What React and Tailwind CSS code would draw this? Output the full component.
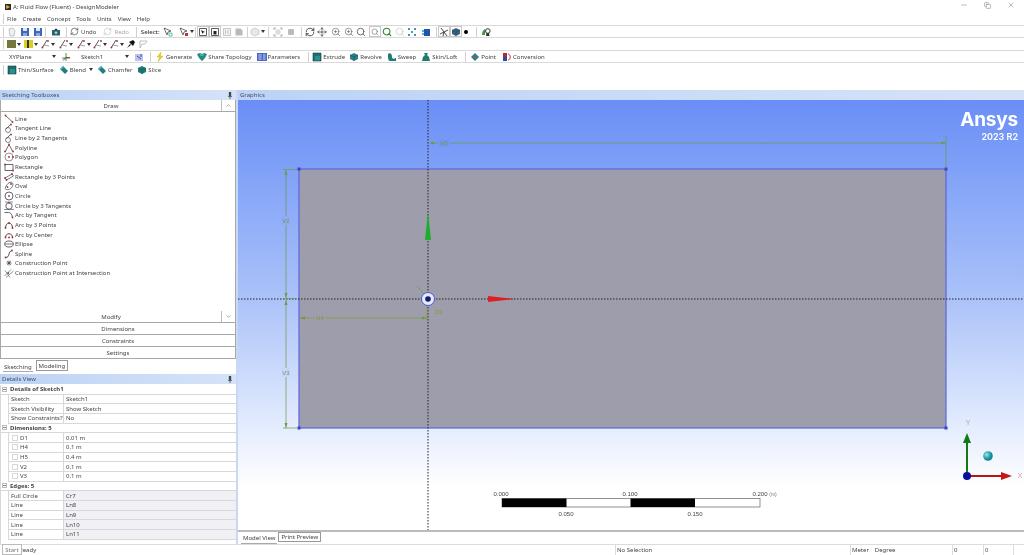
import React from "react";
import { RefreshCw, Move, ZoomIn, Search, Minus, X, Copy, ChevronUp, ChevronDown } from "lucide-react";

const V = ({ children, className = "" }) => (
  <svg viewBox="0 0 10 10" className={"block w-[10px] h-[10px] shrink-0 " + className}>{children}</svg>
);
const Dot = ({ x, y }) => <circle cx={x} cy={y} r="0.9" fill="#a83232" />;
const L = ({ d, c = "#444", w = 0.8 }) => <path d={d} fill="none" stroke={c} strokeWidth={w} />;
const Caret = () => <svg viewBox="0 0 4 3" className="block w-[4px] h-[3px] shrink-0"><path d="M0 0h4L2 3z" fill="#333" /></svg>;
const Sep = ({ className = "" }) => <div className={"w-px h-[10px] bg-[#d0d0d0] shrink-0 " + className} />;
const Cell = ({ children, boxed }) => (
  <div className={"w-[12px] h-[11px] flex items-center justify-center shrink-0 " + (boxed ? "border border-[#c8c8c8]" : "")}>{children}</div>
);
const Narrow = ({ children }) => <div className="w-[10px] h-[11px] flex items-center justify-center shrink-0">{children}</div>;
const T = ({ children, className = "" }) => <span className={"whitespace-nowrap leading-none " + className}>{children}</span>;

const Floppy = () => (
  <V><path d="M1 1h8v8H1z" fill="#3f66b8" /><path d="M3 1h4v3H3z" fill="#dfe8f6" /><path d="M3 6h4v3H3z" fill="#8fa7d8" /></V>
);
const Cube = ({ c = "#1f7a78" }) => (
  <V><path d="M5 1l4 2v4L5 9 1 7V3z" fill={c} /><path d="M1 3l4 2 4-2M5 5v4" stroke="#0f4a4a" strokeWidth="0.5" fill="none" /></V>
);
const SquareTeal = () => (
  <V><path d="M1 1h8v8H1z" fill="#1d6e70" /><path d="M3 4h5v5H3z" fill="#2b8f8d" /><path d="M1 1h8v8H1z" fill="none" stroke="#0d4244" strokeWidth="0.6" /></V>
);
const Tag = () => (
  <V><path d="M1 4l3-3 5 5-3 3z" fill="#1f7f85" /><path d="M1 4l3-3 1 1-3 3z" fill="#66b5b8" /></V>
);
const SketchTool = ({ n }) => (
  <V><L d="M1 9L6 1" w="0.9" /><L d="M3 6l5 1" c="#777" w="0.7" /><Dot x="1.5" y="8.5" /><Dot x={n} y="2" /></V>
);

const Row1 = () => (
  <div className="flex items-center h-[13px] border-y border-[#d9d9d9] pl-[3px] text-[#444] shrink-0">
    <Sep className="mr-[2px]" />
    <Cell><V><path d="M2 2l4-1 2 3-1 5H3z" fill="#eef1f5" stroke="#9aa3ad" strokeWidth="0.6" /></V></Cell>
    <div className="ml-px" /><Cell><Floppy /></Cell>
    <div className="ml-px" /><Cell><Floppy /></Cell>
    <Sep className="ml-[1px] mr-[4px]" />
    <Cell><V><path d="M1 3h8v5.5H1z" fill="#28666e" /><circle cx="5" cy="5.7" r="1.8" fill="#bcd" stroke="#123" strokeWidth="0.5" /><path d="M3.5 3l.7-1.2h1.6L6.5 3z" fill="#333" /></V></Cell>
    <Sep className="ml-[4px] mr-[3px]" />
    <div className="flex items-center gap-px">
      <RefreshCw size={9} strokeWidth={1.6} color="#333" className="shrink-0" />
      <T className="ml-[1px] text-[#444]">Undo</T>
    </div>
    <div className="flex items-center gap-px ml-[7px] text-[#aaa]">
      <RefreshCw size={9} strokeWidth={1.2} color="#aaa" className="shrink-0" />
      <T className="ml-[1px]">Redo</T>
    </div>
    <Sep className="ml-[7px] mr-[4px]" />
    <T className="text-[#333] font-medium">Select:</T>
    <div className="ml-[2px]" />
    <Cell><V><path d="M1 1l3 7 1-3 3-1z" fill="#fff" stroke="#333" strokeWidth="0.7" /><path d="M6 6h3v3H6z" fill="none" stroke="#2a8" strokeWidth="0.7" /></V></Cell>
    <div className="ml-[4px]" />
    <Cell><V><path d="M1 1l3 7 1-3 3-1z" fill="#fff" stroke="#333" strokeWidth="0.7" /><path d="M6 6h3v3H6z" fill="#c0343c" /></V></Cell>
    <Caret />
    <Sep className="ml-[1px] mr-[1px]" />
    <Cell boxed><V><path d="M1.5 1.5h7v7h-7z" fill="#fff" stroke="#333" strokeWidth="0.8" /><path d="M3 3l1.5 4 .8-1.6L7 5z" fill="#222" /></V></Cell>
    <Cell boxed><V><path d="M1.5 1.5h7v7h-7z" fill="#fff" stroke="#333" strokeWidth="0.8" /><path d="M3.5 4h3v3.5h-3z" fill="#222" /></V></Cell>
    <Cell><V><path d="M1.5 1.5h7v7h-7z" fill="#f2f2f2" stroke="#bbb" strokeWidth="0.8" /><path d="M3.5 3v4M6 3v4" stroke="#bbb" strokeWidth="0.8" /></V></Cell>
    <Cell><V><path d="M1.5 1.5h5l2 2v5h-7z" fill="#b9b9b9" /></V></Cell>
    <Sep className="ml-[2px] mr-[1px]" />
    <Cell><V><path d="M5 1l4 2v4L5 9 1 7V3z" fill="#e8e8e8" stroke="#bbb" strokeWidth="0.6" /></V></Cell>
    <Caret />
    <Sep className="ml-[3px] mr-[3px]" />
    <Cell><V><path d="M2.5 2.5h5v5h-5z" fill="#ddd" /><path d="M1 3V1h2M7 1h2v2M9 7v2H7M3 9H1V7" stroke="#999" strokeWidth="0.8" fill="none" /></V></Cell>
    <div className="ml-px" />
    <Cell><V><path d="M2.5 2.5h5v5h-5z" fill="#bbb" stroke="#aaa" strokeWidth="0.6" /></V></Cell>
    <Sep className="ml-[4px] mr-[1px]" />
    <div className="ml-[1px]" />
    <Cell><RefreshCw size={10} strokeWidth={2} color="#333" /></Cell>
    <Cell><Move size={10} strokeWidth={1.6} color="#333" /></Cell>
    <div className="ml-[2px]" />
    <Cell><ZoomIn size={10} strokeWidth={1.4} color="#555" /></Cell>
    <div className="ml-px" />
    <Cell><ZoomIn size={10} strokeWidth={1.4} color="#555" /></Cell>
    <Cell><Search size={10} strokeWidth={2} color="#555" /></Cell>
    <div className="ml-[2px]" />
    <Cell boxed><Search size={8} strokeWidth={1.6} color="#555" /></Cell>
    <Cell><Search size={10} strokeWidth={2.6} color="#2f8a2f" /></Cell>
    <div className="ml-px" />
    <Cell><Search size={10} strokeWidth={1.4} color="#bbb" /></Cell>
    <Cell><V><path d="M1 1h2v2H1zM7 1h2v2H7zM4 4h2v2H4zM1 7h2v2H1zM7 7h2v2H7z" fill="#4a98a8" /></V></Cell>
    <div className="ml-[2px]" />
    <Cell><V><path d="M3 2h6v7H3z" fill="#2454a8" /><path d="M1 3h2v2H1zM1 6h2v2H1z" fill="#55b6c8" /></V></Cell>
    <Sep className="ml-[4px] mr-px" />
    <Cell boxed><V><path d="M5 5L2 1M5 5l4-2M5 5l-1 4M5 5L1 7M5 5l3 4" stroke="#333" strokeWidth="0.9" /></V></Cell>
    <Cell boxed><Cube c="#3b5f80" /></Cell>
    <div className="w-[9px] flex justify-center"><div className="w-[4px] h-[4px] rounded-full bg-black" /></div>
    <Sep className="ml-[5px] mr-[3px]" />
    <Cell><V><path d="M1 8c0-3 1-5 3-6v6z" fill="#3a9a4a" /><circle cx="6.8" cy="4" r="2.3" fill="none" stroke="#333" strokeWidth="1" /><path d="M5.5 6l-.5 3h3.5l-.5-3" fill="#333" /></V></Cell>
  </div>
);

const Row2 = () => (
  <div className="flex items-center h-[12px] pl-[3px] shrink-0">
    <Sep className="mr-[1px]" />
    <Cell><div className="w-[9px] h-[8px] bg-[#75783c]" /></Cell>
    <Caret />
    <div className="ml-px" />
    <Cell><div className="w-[9px] h-[8px] bg-[#d8cf1e] border-x-[3px] border-[#d8cf1e] flex justify-center"><div className="w-[2px] h-full bg-[#333]" /></div></Cell>
    <Caret />
    <div className="ml-[3px]" /><Narrow><SketchTool n="7" /></Narrow><Caret />
    <div className="ml-[4px]" /><Narrow><SketchTool n="8" /></Narrow><Caret />
    <div className="ml-[4px]" /><Narrow><SketchTool n="7" /></Narrow><Caret />
    <div className="ml-[2px]" /><Narrow><SketchTool n="8" /></Narrow><Caret />
    <div className="ml-[3px]" /><Narrow><SketchTool n="7" /></Narrow><Caret />
    <div className="ml-[1px]" /><Cell><V><path d="M1 9l3-4 1 1zM3 3l4-2 2 2-2 4z" fill="#111" /></V></Cell>
    <Cell><V><path d="M2 2h7L7 5H4L2 9z" fill="none" stroke="#999" strokeWidth="0.6" /></V></Cell>
  </div>
);

const Tool = ({ icon, label, className = "" }) => (
  <div className={"flex items-center gap-[1px] shrink-0 " + className}>
    {icon}
    <T className="text-[#444]">{label}</T>
  </div>
);

const Row3 = () => (
  <div className="flex items-center h-[13px] border-y border-[#d9d9d9] shrink-0 pl-[9px]">
    <div className="w-[47px] flex items-center justify-between"><T className="text-[#444]">XYPlane</T><Caret /></div>
    <div className="w-[20px] flex justify-center"><V><path d="M5 1v8M1 6h8" stroke="#2c8a3a" strokeWidth="0.9" /><path d="M5 5.5h4" stroke="#c8202a" strokeWidth="0.9" /><path d="M5 5.5L2 8.5" stroke="#23338c" strokeWidth="0.9" /></V></div>
    <div className="w-[48px] ml-[5px] flex items-center justify-between"><T className="text-[#444]">Sketch1</T><Caret /></div>
    <div className="w-[20px] flex justify-center"><V><path d="M1 2h8v7H1z" fill="#b9c3ee" /><path d="M3 4l4 3M7 2v3" stroke="#4a37a8" strokeWidth="0.9" /></V></div>
    <Sep className="ml-[1px]" />
    <Tool className="ml-[4px]" label="Generate" icon={<V><path d="M6 0L2 5h2.5L3 10l5-6H5.5z" fill="#e8d11e" stroke="#b79f12" strokeWidth="0.3" /></V>} />
    <Tool className="ml-[5px]" label="Share Topology" icon={<V><path d="M0 2l3-1 2 1 2-1 3 1-2 4-3 3-3-3z" fill="#1f8a86" /><path d="M3 3h4" stroke="#d3e6e6" strokeWidth="0.6" /></V>} />
    <Tool className="ml-[5px]" label="Parameters" icon={<V><path d="M0 1h10v8H0z" fill="#4c6bc8" /><path d="M1.5 3h3M1.5 5h3M1.5 7h3M6 3h2.5M6 5h2.5M6 7h2.5" stroke="#e8eefc" strokeWidth="0.8" /></V>} />
    <Sep className="ml-[8px]" />
    <Tool className="ml-[3px]" label="Extrude" icon={<SquareTeal />} />
    <Tool className="ml-[4px]" label="Revolve" icon={<Cube c="#2d7f86" />} />
    <Tool className="ml-[5px]" label="Sweep" icon={<V><path d="M1 2c3-2 4 1 4 3s2 2 4 1v3H3C1 9 1 6 1 2z" fill="#1f7a78" /></V>} />
    <Tool className="ml-[5px]" label="Skin/Loft" icon={<V><path d="M3 1h4l-1 2 2 2 1 4H1l1-4 2-2z" fill="#1f7a70" /></V>} />
    <Sep className="ml-[8px]" />
    <Tool className="ml-[4px]" label="Point" icon={<V><path d="M5 1l4 4-4 4-4-4z" fill="#2d8088" /><circle cx="5" cy="5" r="1" fill="#c43" /></V>} />
    <Tool className="ml-[6px]" label="Conversion" icon={<V><path d="M1 1h4v4H1z" fill="#b0283a" /><path d="M1 5h4v4H1z" fill="#2d4aa0" /><path d="M6 2c3 0 3 6 0 6" fill="none" stroke="#b0283a" strokeWidth="0.9" /></V>} />
  </div>
);

const Row4 = () => (
  <div className="flex items-center h-[13px] pl-[3px] shrink-0">
    <Sep />
    <Tool className="ml-[3px]" label="Thin/Surface" icon={<SquareTeal />} />
    <Tool className="ml-[5px]" label="Blend" icon={<Tag />} />
    <div className="ml-[3px]"><Caret /></div>
    <Tool className="ml-[4px]" label="Chamfer" icon={<Tag />} />
    <Tool className="ml-[5px]" label="Slice" icon={<Cube />} />
  </div>
);

const Header = ({ title, pin }) => (
  <div className="h-[10px] bg-gradient-to-r from-[#bcd3f5] to-[#d5e3f8] flex items-center justify-between px-[2px] shrink-0">
    <T className="text-[#3f4f66]">{title}</T>
    {pin && <svg viewBox="0 0 5 9" className="block w-[4px] h-[7px] mr-[2px]"><path d="M1 0h3v5H1zM0 5h5v1H0zM2 6h1v3H2z" fill="#445" /></svg>}
  </div>
);

const tools = [
  ["Line", <V><L d="M1.5 1.5L8.5 8" /><Dot x="1.5" y="1.5" /><Dot x="8.5" y="8" /></V>],
  ["Tangent Line", <V><circle cx="4" cy="7" r="2.5" fill="none" stroke="#555" strokeWidth="0.7" /><L d="M2 6l5-5" /><Dot x="7" y="1.5" /></V>],
  ["Line by 2 Tangents", <V><circle cx="4" cy="7" r="2.5" fill="none" stroke="#555" strokeWidth="0.7" /><L d="M2 6l5-5" /><Dot x="7" y="1.5" /></V>],
  ["Polyline", <V><L d="M1 9L5 1.5 9 9" /><Dot x="1" y="8.5" /><Dot x="5" y="1.5" /><Dot x="9" y="8.5" /></V>],
  ["Polygon", <V><circle cx="5" cy="5" r="4" fill="none" stroke="#667" strokeWidth="0.7" /><Dot x="5" y="5" /><Dot x="9" y="5" /></V>],
  ["Rectangle", <V><path d="M1 2.5h8v6H1z" fill="none" stroke="#444" strokeWidth="0.8" /><Dot x="1" y="2.5" /><Dot x="9" y="8.5" /></V>],
  ["Rectangle by 3 Points", <V><path d="M1 6l7-4 1.5 2-7 4z" fill="none" stroke="#456" strokeWidth="0.8" /><Dot x="1" y="6" /><Dot x="8" y="2" /><Dot x="2.5" y="8" /></V>],
  ["Oval", <V><path d="M1.5 6.5C3 2 7 0 8.5 2s-1 6-4 6.5-3.5-.5-3-2z" fill="none" stroke="#456" strokeWidth="0.8" /><Dot x="3.5" y="6" /><Dot x="7" y="3" /></V>],
  ["Circle", <V><circle cx="5" cy="5" r="4" fill="none" stroke="#345" strokeWidth="0.8" /><Dot x="5" y="5" /></V>],
  ["Circle by 3 Tangents", <V><circle cx="5" cy="5" r="3.2" fill="none" stroke="#345" strokeWidth="0.8" /><L d="M0 8.5h10M1 1h8" w="0.6" /><Dot x="5" y="1.8" /></V>],
  ["Arc by Tangent", <V><L d="M0.5 2.5h4c2 0 3.5 1.5 4 5" /><Dot x="8.5" y="7.5" /></V>],
  ["Arc by 3 Points", <V><L d="M1.5 8C1.5 1.5 8.5 1.5 8.5 8" w="1" /><Dot x="1.5" y="8" /><Dot x="5" y="3" /><Dot x="8.5" y="8" /></V>],
  ["Arc by Center", <V><L d="M1.5 7.5C1.5 2.5 8.5 2.5 8.5 7.5" w="1" /><Dot x="1.5" y="7.5" /><Dot x="5" y="7.5" /><Dot x="8.5" y="7.5" /></V>],
  ["Ellipse", <V><ellipse cx="5" cy="5" rx="4.3" ry="3" fill="none" stroke="#345" strokeWidth="0.8" /><path d="M1 5h8" stroke="#a83232" strokeWidth="0.8" /></V>],
  ["Spline", <V><L d="M1.5 8.5C7 8 3 3 8 1.5" w="1" /><Dot x="1.5" y="8.5" /><Dot x="8" y="1.5" /></V>],
  ["Construction Point", <V><path d="M5 2.5v5M2.5 5h5M3.2 3.2l3.6 3.6M6.8 3.2L3.2 6.8" stroke="#445" strokeWidth="0.8" /></V>],
  ["Construction Point at Intersection", <V><L d="M0.5 8L7 1.5M2 9.5L9.5 3" c="#678" /><L d="M1 2.5l5 7" c="#678" /><Dot x="4.3" y="5" /></V>],
];

const Accordion = ({ label, arrow }) => (
  <div className="flex border-b border-[#a8a8a8] shrink-0 h-[12px]">
    <div className={"flex-1 flex items-center justify-center " + (arrow ? "border-r border-[#bdbdbd]" : "")}><T className="text-[#444]">{label}</T></div>
    {arrow}
  </div>
);

const Rw = ({ name, value, shade, box }) => (
  <div className="h-[9.67px] flex border-b border-[#d8d8d8] ml-[7px] border-l">
    <div className="w-[55px] border-r border-[#d8d8d8] flex items-center pl-[2px] shrink-0">
      {box && <div className="w-[6px] h-[6px] border border-[#d8d8d8] mr-[2px] ml-px" />}
      <T className="text-[#444]">{name}</T>
    </div>
    <div className={"flex-1 flex items-center pl-[2px] " + (shade ? "bg-[#f0f0f5]" : "")}><T className="text-[#444]">{value}</T></div>
  </div>
);
const Gr = ({ label }) => (
  <div className="h-[9.67px] flex items-center border-b border-[#d8d8d8]">
    <div className="w-[7px] flex justify-center shrink-0"><div className="w-[5px] h-[5px] border border-[#bbb] flex items-center justify-center"><div className="w-[3px] h-px bg-[#888]" /></div></div>
    <T className="font-bold text-[#444] ml-[2px]">{label}</T>
  </div>
);

const Left = () => (
  <div className="w-[236px] flex flex-col shrink-0">
    <Header title="Sketching Toolboxes" pin />
    <div className="flex flex-col border-x border-b border-[#a8a8a8] h-[259px] shrink-0">
      <Accordion label="Draw" arrow={<div className="w-[13px] flex items-center justify-center"><ChevronUp size={7} color="#777" /></div>} />
      <div className="flex-1 flex flex-col pl-[3px] pt-[2px]">
        {tools.map(([n, ic]) => (
          <div key={n} className="h-[9.65px] flex items-center gap-[1px] shrink-0">
            {ic}
            <T className="text-[#444]">{n}</T>
          </div>
        ))}
      </div>
      <Accordion label="Modify" arrow={<div className="w-[13px] flex items-center justify-center"><ChevronDown size={7} color="#777" /></div>} />
      <Accordion label="Dimensions" />
      <Accordion label="Constraints" />
      <div className="h-[11px] flex items-center justify-center shrink-0"><T className="text-[#444]">Settings</T></div>
    </div>
    <div className="flex items-end h-[15px] pl-[3px] pb-[2px] shrink-0">
      <div className="h-[10px] px-[1px] border-b border-[#aaa] flex items-center mr-[3px]"><T className="text-[#444]">Sketching</T></div>
      <div className="h-[11px] px-[2px] border border-[#999] flex items-center mb-[1px]"><T className="text-[#444]">Modeling</T></div>
    </div>
    <Header title="Details View" pin />
    <div className="flex-1 flex flex-col border-l border-[#d8d8d8] min-h-0 mt-[1px]">
      <Gr label="Details of Sketch1" />
      <Rw name="Sketch" value="Sketch1" />
      <Rw name="Sketch Visibility" value="Show Sketch" />
      <Rw name="Show Constraints?" value="No" />
      <Gr label="Dimensions: 5" />
      <Rw box name="D1" value="0.01 m" />
      <Rw box name="H4" value="0.1 m" />
      <Rw box name="H5" value="0.4 m" />
      <Rw box name="V2" value="0.1 m" />
      <Rw box name="V3" value="0.1 m" />
      <Gr label="Edges: 5" />
      <Rw shade name="Full Circle" value="Cr7" />
      <Rw shade name="Line" value="Ln8" />
      <Rw shade name="Line" value="Ln9" />
      <Rw shade name="Line" value="Ln10" />
      <Rw shade name="Line" value="Ln11" />
    </div>
  </div>
);

const dim = "#6f9a45";
const Lbl = ({ x, y, children, fill = dim, size = 6, anchor = "middle" }) => (
  <text x={x} y={y} fill={fill} fontSize={size} textAnchor={anchor} fontFamily="Liberation Sans, sans-serif">{children}</text>
);

const Scene = () => (
  <svg viewBox="238 100 786 430" className="absolute inset-0 w-full h-full">
    <rect x="299" y="169" width="647" height="259" fill="#9e9dab" stroke="#5a66dc" strokeWidth="1.2" />
    {[[299, 169], [946, 169], [299, 428], [946, 428]].map(([x, y]) => (
      <rect key={x + "-" + y} x={x - 1.5} y={y - 1.5} width="3" height="3" fill="#3b3fd0" />
    ))}
    <path d="M428 100V530M238 299H1024" stroke="#222" strokeWidth="1" strokeDasharray="1.5 1.5" fill="none" />
    <g stroke={dim} strokeWidth="0.7" fill="none">
      <path d="M431 143H946M946 136V169" />
      <path d="M286 170V298M286 300V428M283 169.5H297M283 298.5H297M283 428H297" />
      <path d="M300 318H427M427 305V320" stroke="#7f9a30" />
      <path d="M417 286L425 295" />
    </g>
    <g fill={dim}>
      <path d="M429 143l5-1.5v3zM946 143l-5-1.5v3z" />
      <path d="M286 170l-1.5 5h3zM286 298l-1.5-5h3zM286 300l-1.5 5h3zM286 428l-1.5-5h3z" />
      <path d="M300 318l5-1.5v3zM427 318l-5-1.5v3z" />
    </g>
    <rect x="438" y="139" width="12" height="8" fill="#7496f4" />
    <Lbl x="444" y="145">H5</Lbl>
    <rect x="282" y="216" width="8" height="9" fill="#8fabf6" />
    <Lbl x="286" y="223">V2</Lbl>
    <rect x="282" y="368" width="8" height="9" fill="#c6d5fa" />
    <Lbl x="286" y="375">V3</Lbl>
    <rect x="314" y="314" width="12" height="8" fill="#9e9dab" />
    <Lbl x="320" y="320" fill="#7f9a30">H4</Lbl>
    <Lbl x="439" y="314" fill="#7f9a30">D1</Lbl>
    <path d="M428 212L431 240H425z" fill="#1fae2c" />
    <path d="M515 299L488 296V302z" fill="#dd1f1f" />
    <circle cx="428" cy="299" r="6.5" fill="#e6e9fb" stroke="#4a58d8" strokeWidth="1" />
    <circle cx="428" cy="299" r="2.8" fill="#101a78" />
    <g>
      <path d="M967 476V441" stroke="#137a13" strokeWidth="2" />
      <path d="M967 433l-4 10h8z" fill="#137a13" />
      <path d="M967 476H1002" stroke="#b81515" strokeWidth="2" />
      <path d="M1012 476l-11-4v8z" fill="#c81515" />
      <circle cx="967" cy="476" r="4" fill="#0c0c9c" />
      <defs><radialGradient id="ball" cx="0.35" cy="0.35"><stop offset="0" stopColor="#8fe8ee" /><stop offset="1" stopColor="#128a98" /></radialGradient></defs>
      <circle cx="988" cy="456" r="4.8" fill="url(#ball)" />
      <Lbl x="968" y="425" fill="#8fb98f" size="7">Y</Lbl>
      <Lbl x="1020" y="478" fill="#d9a0a0" size="7">X</Lbl>
    </g>
    <g>
      <rect x="502" y="498.5" width="258" height="8.5" fill="#fff" stroke="#777" strokeWidth="0.8" />
      <rect x="502" y="498.5" width="64.5" height="8.5" fill="#000" />
      <rect x="630.5" y="498.5" width="64.5" height="8.5" fill="#000" />
      <Lbl x="501" y="496" fill="#444">0.000</Lbl>
      <Lbl x="630" y="496" fill="#444">0.100</Lbl>
      <Lbl x="760" y="496" fill="#444">0.200</Lbl>
      <Lbl x="773" y="496" fill="#777" size="5">(m)</Lbl>
      <Lbl x="566" y="516" fill="#444">0.050</Lbl>
      <Lbl x="695" y="516" fill="#444">0.150</Lbl>
    </g>
  </svg>
);

const Right = () => (
  <div className="flex-1 flex flex-col min-w-0">
    <Header title="Graphics" />
    <div className="relative h-[430px] shrink-0 bg-gradient-to-b from-[#6a8ef6] via-[#a9c1f8] via-45% to-[#ffffff] to-90%">
      <Scene />
      <div className="absolute right-[6px] top-[10px] flex flex-col items-end text-white font-['Inter',sans-serif] font-bold">
        <span className="text-[19px] leading-[20px] tracking-[-0.2px]">Ansys</span>
        <span className="text-[9px] leading-[10px] mt-[2px] font-semibold">2023 R2</span>
      </div>
    </div>
    <div className="h-[2px] bg-[#bbb] shrink-0" />
    <div className="flex items-start pl-[3px] h-[12px] shrink-0">
      <div className="h-[11px] mt-[1px] px-[2px] border-b border-[#aaa] flex items-center"><T className="text-[#444]">Model View</T></div>
      <div className="h-[10px] px-[2px] border border-[#999] flex items-center ml-[1px]"><T className="text-[#444]">Print Preview</T></div>
    </div>
  </div>
);

export default function App() {
  return (
    <div className="relative w-[1024px] h-[555px] overflow-hidden bg-white flex flex-col font-['Noto_Sans',sans-serif] text-[6px] blur-[0.35px]">
      <div className="h-[13px] flex items-center pl-[5px] shrink-0">
        <svg viewBox="0 0 10 10" className="block w-[6px] h-[6px]"><path d="M0 0h10v10H0z" fill="#2b2b2b" /><path d="M2 1.5L8.5 5 2 8.5z" fill="#f0b21e" /></svg>
        <T className="ml-[2px] text-[#444]">A: Fluid Flow (Fluent) - DesignModeler</T>
        <div className="ml-auto flex items-center gap-[16px] pr-[9px] pb-[3px] text-[#555]">
          <Minus size={8} strokeWidth={1.2} />
          <Copy size={7} strokeWidth={1.4} />
          <X size={8} strokeWidth={1.2} />
        </div>
      </div>
      <div className="h-[12px] flex items-center pl-[3px] gap-[6px] text-[#444] shrink-0">
        <Sep className="mr-[-3px]" />
        {["File", "Create", "Concept", "Tools", "Units", "View", "Help"].map((m) => <T key={m}>{m}</T>)}
      </div>
      <Row1 />
      <Row2 />
      <Row3 />
      <Row4 />
      <div className="h-[14px] shrink-0" />
      <div className="flex h-[454px] shrink-0">
        <Left />
        <div className="w-[2px] bg-[#c9d8f3] shrink-0" />
        <Right />
      </div>
      <div className="absolute left-0 right-0 bottom-0 h-[11px] border-t border-[#dcdcdc] flex items-center text-[#444] bg-white">
        <T className="ml-[19px] w-[596px]">Ready</T>
        <div className="w-[235px] border-l border-[#dcdcdc] pl-[1px] h-full flex items-center"><T>No Selection</T></div>
        <div className="w-[102px] border-l border-[#dcdcdc] pl-[1px] h-full flex items-center gap-[6px]"><T>Meter</T><T>Degree</T></div>
        <div className="w-[31px] border-l border-[#dcdcdc] pl-[1px] h-full flex items-center"><T>0</T></div>
        <div className="w-[30px] border-l border-[#dcdcdc] pl-[1px] h-full flex items-center"><T>0</T></div>
        <div className="flex-1 border-l border-[#dcdcdc] h-full" />
      </div>
      <div className="absolute left-[2px] bottom-0 w-[20px] h-[11px] border border-[#bbb] bg-white flex items-center justify-center"><T className="text-[#777]">Start</T></div>
    </div>
  );
}
